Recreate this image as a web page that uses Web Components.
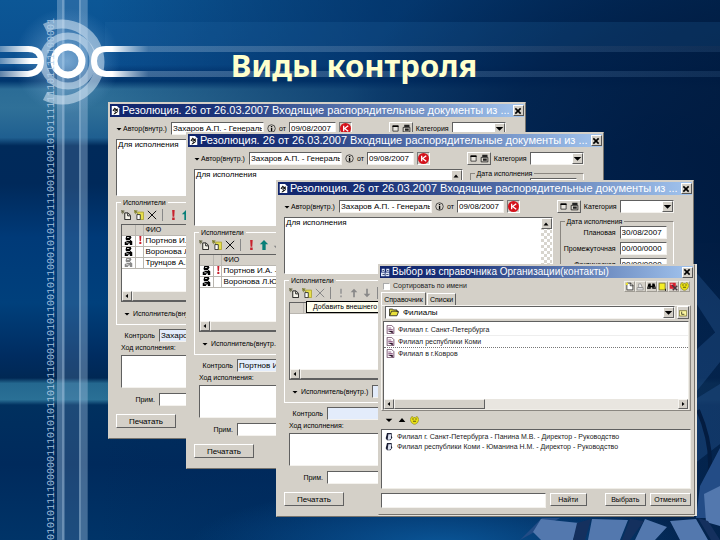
<!DOCTYPE html>
<html lang="ru">
<head>
<meta charset="utf-8">
<title>Виды контроля</title>
<style>
html, body { margin: 0; min-height: 100%; }
body { background: #002b5c; font-family: "Liberation Sans", Arial, sans-serif; }
</style>
</head>
<body>
<eos-slide></eos-slide>
<script>
const define = (name, html, setup) => {
  const tpl = document.createElement('template');
  tpl.innerHTML = html;
  customElements.define(name, class extends HTMLElement {
    constructor() {
      super();
      this.attachShadow({ mode: 'open' }).append(tpl.content.cloneNode(true));
    }
    connectedCallback() { if (setup) setup(this, this.shadowRoot); }
  });
};

const FORM = `
  * { box-sizing: border-box; }
  input, textarea, select, button { font: inherit; color: #000; margin: 0; border-radius: 0; min-width: 0; }
  input:not([type=checkbox]), textarea, select {
    display: block; background: #fff; padding: 0 1px; height: 13px; resize: none; overflow: hidden; font-size: 8px;
    border: 1px solid; border-color: #606060 #f4f2ee #f4f2ee #606060; appearance: none; outline: 0; }
  button { background: #d4d0c8; border: 1px solid; border-color: #fff #606060 #606060 #fff; padding: 0; height: 14px; line-height: 11px; }
  .combo { position: relative; }
  .combo ui-icon { position: absolute; right: 1px; top: 1px; pointer-events: none; background: #d4d0c8; border: 1px solid; border-color: #fff #606060 #606060 #fff; }
`;

/* 12x12 pictograms */
const ICONS = {
  doc: '<path fill="#fff" d="M1 0h7l3 3v9H1z"/><path d="M2 6l3-4 2 2 2-1v5l-4 3H3l3-3z" fill="#111"/><path d="M4 5h2v1H4zM6 7h2v1H6z" fill="#fff"/>',
  people: '<path fill="#dfe8f8" d="M1 1h4v4H1zM7 1h4v4H7zM0 6h5v5H0zM6 6h5v5H6z"/><path d="M2 3h2v1H2zM8 3h2v1H8zM2 8h3v1H2zM7 8h3v1H7z" fill="#102050"/>',
  close: '<path d="M2 2l8 8M10 2L2 10" stroke="#000" stroke-width="2.4"/>',
  down: '<path d="M1 4h10L6 9z"/>',
  up: '<path d="M1 9h10L6 3z"/>',
  left: '<path d="M8 2v8L3 6z"/>',
  right: '<path d="M4 2v8l5-4z"/>',
  info: '<circle cx="6" cy="6" r="5" fill="none" stroke="#222"/><path d="M5.200 5h1.800v5H5.200zM5.200 2.500h1.800v1.500H5.200z"/>',
  k: '<circle cx="6" cy="6" r="6" fill="#d4121c"/><path d="M4 3v6M9 3L5 6l4 3" stroke="#fff" stroke-width="1.400" fill="none"/>',
  page: '<path fill="#f4f2e8" stroke="#000" d="M4.500 3.500h4l3 3v5h-7z"/><path d="M8 4v3h3" fill="none" stroke="#000"/><path d="M0 2h4M2 0v5M0 0l4 4M4 0L0 4" stroke="#5c5c38" stroke-width=".8"/>',
  pagey: '<path fill="#e6df4c" stroke="#a8a030" d="M4.500 2.500h7v9h-7z"/><path fill="#fff" stroke="#222" d="M3.500 5.500h4v6h-4z"/><path d="M0 2h4M2 0v5M0 0l4 4M4 0L0 4" stroke="#777720" stroke-width=".9"/>',
  del: '<path d="M1 1l10 10M11 1L1 11" stroke="#111" stroke-width="1.200"/>',
  delg: '<path d="M1 1l10 10M11 1L1 11" stroke="#888" stroke-width="1.200"/>',
  bang: '<path fill="#c8202c" d="M5 0h3l-.5 8h-2zM5 9h3v3H5z"/>',
  bangg: '<path fill="#999" d="M5 1h2v6H5zM5 9h2v2H5z"/>',
  arrup: '<path fill="#087f78" d="M6 0l5 5H8v7H4V5H1z"/>',
  arrupg: '<path fill="#888" d="M6 1l4 4H7v6H5V5H2z"/>',
  arrdn: '<path fill="#888" d="M6 11l4-4H7V1H5v6H2z"/>',
  man: '<path d="M3 0h6l1 2-2 3 3 2v5H8l-1-3-2 3H1V8l3-1-2-3z"/><path d="M4 2h3M3 6h5M3 9h3" stroke="#fff"/>',
  mang: '<g fill="#8a8a8a"><path d="M3 0h6l1 2-2 3 3 2v5H8l-1-3-2 3H1V8l3-1-2-3z"/></g><path d="M4 2h3M3 6h5M3 9h3" stroke="#fff"/>',
  box: '<path fill="#e8e5de" stroke="#222" d="M2.500 2.500h7v7h-7z"/><path d="M2 2h8v2H2z"/>',
  cal: '<path fill="#d8d4cc" stroke="#111" d="M1.500 4.500h9v6h-9z"/><path d="M3 1h7v3H3zM4 6h5v3H4z" fill="#222"/>',
  folder: '<path fill="#e9e13a" stroke="#222" d="M.5 10.500v-8h4l1 1h4v2h2l-2 5z"/><path d="M1 10l2-5h8" stroke="#222" fill="none"/>',
  sheet: '<path fill="#fff" stroke="#5b3050" d="M1.500.5h6l3 3v8h-9z"/><path d="M3 4h4M3 6h6M3 8h6v3" stroke="#74386a"/>',
  face: '<path d="M3 0h7v4l1 3-3 4H3L1 8l1-4z" fill="#1c2036"/><path d="M5 2h4v6l-2 2H4z" fill="#dde2f0"/>',
  new: '<path fill="#fff" stroke="#222" d="M2.500 1.500h5l3 3v6h-8z"/><path d="M7 1v4h4" stroke="#222" fill="none"/><path fill="#e7df38" d="M1 1h3v3H1z"/>',
  edit: '<path fill="#eee" stroke="#888" d="M1.500 7.500h8v3h-8zM3.500 2.500h3l2 5h-5z"/>',
  find: '<path d="M2 2h3v3h2V2h3l2 7H7V7H5v2H0z"/><path d="M2 7h1M9 7h1" stroke="#fff"/>',
  book: '<path fill="#f5ee26" stroke="#6d6720" d="M1.500 1.500h8v9h-8z"/><path d="M10 9v3" stroke="#000"/>',
  bookdel: '<path fill="#d82030" d="M1 1h8v8H1z"/><path d="M4 4l7 7M11 5l-6 6" stroke="#4a3540" stroke-width="2"/><path d="M2 3h3" stroke="#fff"/>',
  hands: '<path d="M2 1h2l1 1h2l1-1h2l2 4-2 4-3 2H5L2 9 0 5z" fill="#e8df16" stroke="#77731a" stroke-width=".7"/><path d="M3 4h2M7 4h2M4 7h4" stroke="#33320a"/>',
  level: '<path fill="#fbf6a0" stroke="#66621c" d="M.5 2.500h11v8H.5z"/><path d="M4 4v4h4" stroke="#000" fill="none"/>'
};

customElements.define('ui-icon', class extends HTMLElement {
  constructor() { super(); this.attachShadow({ mode: 'open' }); }
  connectedCallback() {
    const s = this.getAttribute('size') || 10;
    this.shadowRoot.innerHTML = `<style>:host{display:inline-block;flex:none;line-height:0}svg{display:block}</style>
      <svg width="${s}" height="${s}" viewBox="0 0 12 12" aria-hidden="true">${ICONS[this.getAttribute('name')]}</svg>`;
  }
});

define('classic-window', `
<style>
  :host { display: block; background: #d4d0c8; padding: 2px; border: 1px solid; border-color: #d4d0c8 #77746e #77746e #d4d0c8; box-sizing: border-box; }
  header { display: flex; align-items: center; gap: 2px; height: var(--bar, 13px); padding: 0 0 0 1px; margin: -1px -1px 0;
    background: linear-gradient(90deg, #10246c, #1b3379 25%, #a2c4ee); color: #fff; font: var(--caption, 11px/13px "Liberation Sans", sans-serif); white-space: nowrap; }
  h2 { flex: 1; min-width: 0; margin: 0; font: inherit; }
  button { flex: none; box-sizing: border-box; width: 11px; height: 11px; padding: 0; display: grid; place-items: center;
    background: #d4d0c8; border: 1px solid; border-color: #fff #555 #555 #fff; }
</style>
<header><ui-icon size="9"></ui-icon><h2></h2><button aria-label="Закрыть"><ui-icon name="close" size="8"></ui-icon></button></header>
<slot></slot>`, (el, root) => {
  root.querySelector('h2').textContent = el.getAttribute('caption');
  const icon = root.querySelector('header > ui-icon');
  icon.setAttribute('name', el.getAttribute('icon') || 'doc');
  icon.connectedCallback();
});

define('scroll-strip', `
<style>
  :host { display: flex; height: 10px; background: #e9e6e0; }
  span { box-sizing: border-box; width: 10px; display: grid; place-items: center; background: #d4d0c8; border: 1px solid; border-color: #f6f4f0 #606060 #606060 #f6f4f0; }
  .thumb { width: var(--thumb, 80%); }
  .last { margin-left: auto; }
</style>
<span><ui-icon name="left" size="6"></ui-icon></span><span class="thumb"></span><span class="last"><ui-icon name="right" size="6"></ui-icon></span>`);

define('resolution-window', `
<style>${FORM}
  :host { display: block; font-size: 7px; line-height: 10px; }
  .body { padding: 5px 17px 8px 5px; }
  .line { display: flex; align-items: center; height: 13px; gap: 4px; white-space: nowrap; }
  .head { gap: 3px; }
  .author { flex: 0 0 93px; background: #e3ecfb; }
  .head label.a { flex: 0 0 52px; display: flex; align-items: center; gap: 1px; }
  .head .date, .dates input { width: 47px; }
  .k { display: grid; width: 13px; height: 13px; place-items: center; border: 1px solid; border-color: #777 #fff #fff #777; }
  .pair { display: flex; gap: 2px; margin-left: auto; padding: 0 1px; height: 13px; align-items: center; border: 1px solid; border-color: #fff #606060 #606060 #fff; }
  .combo { width: 54px; } .combo select { width: 100%; }
  .cols { display: grid; grid-template-columns: minmax(0, 1fr) 114px; column-gap: 7px; padding-top: 4px; }
  .cols > div { display: flex; flex-direction: column; }
  .text { display: flex; height: 57px; border: 1px solid; border-color: #606060 #fff #fff #606060; background: #fff; }
  .text textarea { flex: 1; height: auto; border: 0; }
  .bar { width: 11px; background: repeating-conic-gradient(#d8d5ce 0 25%, #fff 0 50%) 0 0 / 6px 6px; }
  .bar span { display: grid; place-items: center; height: 11px; background: #d4d0c8; border: 1px solid; border-color: #fff #606060 #606060 #fff; }
  fieldset { margin: 0; border: 1px solid; border-color: #8a8680 #fff #fff #8a8680; min-width: 0; padding: 0 5px 4px 4px; }
  fieldset.ex { border-color: #fff; margin-top: 2px; }
  legend { padding: 0 2px; height: 9px; line-height: 9px; }
  .tools { display: flex; align-items: center; height: 15px; gap: 3px; }
  .tools button { border: 0; width: 10px; height: 12px; display: grid; place-items: center; background: none; }
  .tools i { width: 1px; height: 12px; background: #888; margin: 0 2px; }
  .grid { display: flex; flex-direction: column; height: 78px; margin-top: 2px; background: #fff; border: 1px solid; border-color: #606060 #fff #606060 #606060; }
  .grid scroll-strip { margin-top: auto; }
  table { border-collapse: collapse; width: 100%; table-layout: fixed; font-size: 8px; }
  th { height: 10px; background: #d4d0c8; text-align: left; font-weight: 400; font-size: 7px; }
  th, td { padding: 0 2px; border: 1px solid #b9b6b0; border-width: 0 1px 1px 0; line-height: 9px; white-space: nowrap; overflow: hidden; }
  td { height: 11px; }
  td:nth-child(2) { padding: 0; }
  td ui-icon { vertical-align: top; }
  .ex .line { margin-top: 5px; }
  .ex .line label { display: flex; align-items: center; gap: 3px; flex: 0 0 79px; padding-left: 3px; }
  .line .wide { flex: 1; }
  .blue { background: #e3ecfb !important; }
  .form label.r { flex: 0 0 39px; text-align: right; }
  .form { padding-top: 4px; display: flex; flex-direction: column; }
  .form > label { padding-left: 5px; line-height: 12px; height: 13px; }
  .form textarea { height: 33px; margin-left: 5px; }
  .form .note { margin-top: 5px; }
  .print { width: 60px; margin-top: 8px; font-size: 8px; }
  .dates { align-self: start; padding: 0 6px 6px 0; }
  .dates legend { margin-left: 4px; }
  .dates .line { justify-content: flex-end; margin-bottom: 3px; }
</style>
<classic-window>
  <div class="body">
    <div class="line head">
      <label class="a" for="author"><ui-icon name="down" size="6"></ui-icon>Автор(внутр.)</label>
      <input id="author" class="author" value="Захаров А.П. - Генераль">
      <ui-icon name="info" size="9"></ui-icon>
      <label for="date">от</label><input id="date" class="date" value="09/08/2007">
      <span class="k"><ui-icon name="k" size="11"></ui-icon></span>
      <span class="pair"><ui-icon name="box" size="9"></ui-icon><ui-icon name="cal" size="9"></ui-icon></span>
      <label class="c" for="cat">Категория</label>
      <span class="combo"><select id="cat"></select><ui-icon name="down" size="9"></ui-icon></span>
    </div>
    <div class="cols">
      <div>
        <div class="text"><textarea aria-label="Текст резолюции">Для исполнения</textarea><div class="bar"><span><ui-icon name="up" size="6"></ui-icon></span></div></div>
        <fieldset class="ex"><legend>Исполнители</legend>
          <div class="tools"></div>
          <div class="grid"><table><colgroup><col style="width:13px"><col style="width:8px"><col></colgroup>
            <thead><tr><th></th><th></th><th class="name"></th></tr></thead><tbody></tbody></table><scroll-strip></scroll-strip></div>
          <div class="line"><label for="who"><ui-icon name="down" size="6"></ui-icon>Исполнитель(внутр.)</label><input id="who" class="wide blue"></div>
        </fieldset>
        <div class="form">
          <div class="line"><label class="r" for="ctl">Контроль</label><input id="ctl" class="wide blue"></div>
          <label for="run">Ход исполнения:</label>
          <textarea id="run"></textarea>
          <div class="line note"><label class="r" for="note">Прим.</label><input id="note" class="wide"></div>
          <button class="print">Печатать</button>
        </div>
      </div>
      <fieldset class="dates"><legend>Дата исполнения</legend>
        <div class="line"><label for="d1">Плановая</label><input id="d1" value="30/08/2007"></div>
        <div class="line"><label for="d2">Промежуточная</label><input id="d2" value="00/00/0000"></div>
        <div class="line"><label for="d3">Фактическая</label><input id="d3" value="00/00/0000"></div>
      </fieldset>
    </div>
  </div>
</classic-window>`, (el, root) => {
  root.querySelector('classic-window').setAttribute('caption', 'Резолюция. 26 от 26.03.2007 Входящие распорядительные документы из ...');
  root.querySelector('classic-window').connectedCallback();
  root.getElementById('ctl').value = el.getAttribute('control') || '';
  const people = (el.getAttribute('people') || '').split('|').filter(Boolean);
  root.querySelector('.name').textContent = people.length ? 'ФИО' : '';
  root.querySelector('tbody').innerHTML = people.map((p, i) =>
    `<tr><td><ui-icon name="${i === 2 ? 'mang' : 'man'}" size="9"></ui-icon></td><td>${i ? '' : '<ui-icon name="bang" size="8"></ui-icon>'}</td><td>${p}</td></tr>`).join('');
  const off = !people.length;
  const tool = (n, t) => `<button aria-label="${t}"><ui-icon name="${n}" size="10"></ui-icon></button>`;
  root.querySelector('.tools').innerHTML = tool('page', 'Добавить') + tool('pagey', 'Добавить внешнего') + tool(off ? 'delg' : 'del', 'Удалить')
    + '<i></i>' + tool(off ? 'bangg' : 'bang', 'Ответственный') + tool(off ? 'arrupg' : 'arrup', 'Выше') + tool('arrdn', 'Ниже') + '<i></i>';
});

define('organisation-dialog', `
<style>${FORM}
  :host { display: block; font-size: 7px; line-height: 10px; color: #222; --caption: 10px/12px "Liberation Sans", sans-serif; --bar: 12px; }
  .body { padding: 2px 1px 4px 0; }
  .opts { display: flex; align-items: center; justify-content: space-between; height: 12px; padding-right: 1px; }
  .opts label { display: flex; align-items: center; gap: 3px; padding-left: 2px; }
  .opts input { appearance: none; width: 7px; height: 7px; background: #fff; border: 1px solid; border-color: #aaa #fff #fff #aaa; }
  .opts div { display: flex; }
  .opts button { width: 11px; height: 11px; display: grid; place-items: center; border-color: #f0eee8 #a09c94 #a09c94 #f0eee8; }
  .tabs { display: flex; align-items: flex-end; gap: 1px; height: 13px; }
  .tabs button { border-bottom: 0; height: 12px; width: 29px; }
  .tabs button:first-child { width: 45px; height: 13px; }
  .panel { border: 1px solid; border-color: #f6f4f0 #8a8680 #8a8680 #f6f4f0; padding: 0 1px; }
  .pick { display: flex; gap: 2px; padding: 0 0 2px 2px; }
  .combo { flex: 1; }
  .combo select { width: 100%; padding-left: 17px; }
  .combo ui-icon[name=folder] { left: 4px; right: auto; top: 1px; background: none; border: 0; }
  .pick button { width: 12px; height: 13px; display: grid; place-items: center; }
  .list { background: #fff; border: 1px solid; border-color: #606060 #f0eee8 #f0eee8 #606060; }
  .big { height: 89px; display: flex; flex-direction: column; }
  ul { list-style: none; margin: 0; padding: 1px 0 0; }
  li { display: flex; align-items: center; gap: 3px; height: 12px; padding-left: 2px; white-space: nowrap; border-bottom: 1px solid transparent; }
  .big li { margin-bottom: -1px; border-bottom: 0; height: 13px; }
  .big li:nth-child(2) { border: 1px dotted #777; border-width: 0 0 1px; border-top: 1px solid #eee; }
  .big scroll-strip { margin-top: auto; --thumb: 91px; }
  .moves { display: flex; align-items: center; gap: 4px; height: 18px; padding: 2px 3px; }
  .moves button { border: 0; height: 9px; width: 9px; display: grid; place-items: center; background: none; }
  .small { height: 60px; }
  .small ul { padding: 2px 0 0 1px; }
  .small li { height: 10px; gap: 4px; }
  .foot { display: flex; align-items: flex-start; padding-top: 4px; gap: 4px; }
  .foot input { flex: 1; height: 15px; }
  .foot button { width: 41px; height: 13px; }
  .foot .f { width: 37px; margin-right: 14px; }
</style>
<classic-window icon="people" caption="Выбор из справочника Организации(контакты)">
  <div class="body">
    <div class="opts"><label><input type="checkbox">Сортировать по имени</label><div>
      <button aria-label="Новый"><ui-icon name="new" size="9"></ui-icon></button><button aria-label="Изменить"><ui-icon name="edit" size="9"></ui-icon></button><button aria-label="Искать"><ui-icon name="find" size="9"></ui-icon></button><button aria-label="Книга"><ui-icon name="book" size="9"></ui-icon></button><button aria-label="Удалить"><ui-icon name="bookdel" size="9"></ui-icon></button><button aria-label="Связи"><ui-icon name="hands" size="9"></ui-icon></button>
    </div></div>
    <div class="tabs"><button>Справочник</button><button>Списки</button></div>
    <div class="panel">
      <div class="pick"><span class="combo"><select aria-label="Раздел"><option>Филиалы</option></select><ui-icon name="folder" size="10"></ui-icon><ui-icon name="down" size="9"></ui-icon></span><button aria-label="Уровень вверх"><ui-icon name="level" size="8"></ui-icon></button></div>
      <div class="list big"><ul>
        <li><ui-icon name="sheet" size="9"></ui-icon>Филиал г. Санкт-Петербурга</li>
        <li><ui-icon name="sheet" size="9"></ui-icon>Филиал республики Коми</li>
        <li><ui-icon name="sheet" size="9"></ui-icon>Филиал в г.Ковров</li></ul><scroll-strip></scroll-strip></div>
    </div>
    <div class="moves"><button aria-label="Добавить"><ui-icon name="down" size="8"></ui-icon></button><button aria-label="Убрать"><ui-icon name="up" size="8"></ui-icon></button><button aria-label="Контакты"><ui-icon name="hands" size="9"></ui-icon></button></div>
    <div class="list small"><ul>
      <li><ui-icon name="face" size="8"></ui-icon>Филиал г. Санкт-Петербурга - Панина М.В. - Директор - Руководство</li>
      <li><ui-icon name="face" size="8"></ui-icon>Филиал республики Коми - Юманина Н.М. - Директор - Руководство</li></ul></div>
    <div class="foot"><input aria-label="Строка поиска"><button class="f">Найти</button><button>Выбрать</button><button>Отменить</button></div>
  </div>
</classic-window>`);

define('slide-backdrop', `
<style>
  :host { display: block; overflow: hidden;
    background:
      radial-gradient(ellipse 45% 42% at 92% 27%, #00163a 0, #00163acc 50%, transparent 100%),
      linear-gradient(90deg, transparent 72%, #2a5f9a66 100%) 0 100% / 100% 55% no-repeat,
      linear-gradient(180deg, #0c5796 0, #0a4f90 12%, #05407e 13%, #00366e 15%, #2b6c96 16.500%, #2f7098 20%, #1f5f90 25.500%, #002a5a 27%, #00295a 34%, #003a78 44%, #00407c 56%, #002c60 66%, #002854 70%, #24688f 71%, #2a7096 74%, #00305f 75%, #002a5c 86%, #003468 100%); }
  svg { display: block; width: 100%; height: 100%; }
</style>
<svg viewBox="0 0 720 540" preserveAspectRatio="xMinYMin slice" aria-hidden="true">
  <defs>
    <linearGradient id="dark"><stop offset="0" stop-color="#002454" stop-opacity="0"/><stop offset=".45" stop-color="#002a5e" stop-opacity=".85"/><stop offset="1" stop-color="#001c42"/></linearGradient>
    <linearGradient id="ray"><stop offset="0" stop-color="#fff"/><stop offset=".06" stop-color="#cfe2f4" stop-opacity=".28"/><stop offset="1" stop-color="#7fb0e0" stop-opacity=".12"/></linearGradient>
    <linearGradient id="lft" gradientUnits="userSpaceOnUse" x1="0" x2="30" y1="0" y2="0"><stop offset="0" stop-color="#fff" stop-opacity=".35"/><stop offset="1" stop-color="#fff"/></linearGradient>
    <radialGradient id="glow"><stop offset="0" stop-color="#b8dcf8" stop-opacity=".55"/><stop offset="1" stop-color="#8fc0e8" stop-opacity="0"/></radialGradient>
    <radialGradient id="floor"><stop offset="0" stop-color="#0a5698"/><stop offset="1" stop-color="#0a5090" stop-opacity="0"/></radialGradient>
  </defs>
  <rect x="100" width="620" height="540" fill="url(#dark)" opacity=".8"/>
  <ellipse cx="440" cy="545" rx="250" ry="60" fill="url(#floor)"/>
  <g fill="#2b5c98" opacity=".35"><path d="M694 270l26 30v40l-26-40zM696 350l24-22v34l-24 30zM694 400l26-16v60l-26 20z"/></g>
  <path d="M698 410q22 50 4 96" fill="none" stroke="#031c40" stroke-width="4"/>
  <path d="M520 540l22-22h178v-70l-20 38-4 32H560z" fill="#234c86"/>
  <g fill="#5378ae"><path d="M541 519l38 4-6 17h-32l-8-8zM592 519l36 1-8 20h-32zM645 519l22 8-12 13h-20zM670 521l26-2 12 21h-28zM704 494l16-8v40l-14-4z"/></g>
  <g fill="#14305e"><path d="M577 523l14-4-6 21h-12zM630 519l14 2-14 19h-8zM698 518l10 3 12 19h-9z"/></g>
  <rect x="57" width="30" height="540" fill="#82aad0" opacity=".22"/>
  <g fill="#b4cfe8"><rect x="57" width="8" height="540" opacity=".25"/><rect x="62" width="2" height="540" opacity=".35"/><rect x="79" width="9" height="540" opacity=".25"/><rect x="79" width="2" height="540" opacity=".3"/></g>
  <rect x="105" y="22" width="615" height="24" fill="#2a6ca8" opacity=".2"/>
  <circle cx="67" cy="61" r="53" fill="url(#glow)"/>
  <g fill="none" stroke="#dbeaf6" stroke-opacity=".55"><path d="M45 28A38 38 0 1 1 45 96" stroke-width="9"/><circle cx="68" cy="61" r="25" stroke-width="7"/></g>
  <circle cx="68" cy="61" r="14" fill="none" stroke="#fff" stroke-width="7"/>
  <path d="M0 49h28q13 0 13 12t-13 13H0" fill="none" stroke="url(#lft)" stroke-width="6"/>
  <rect y="58" width="38" height="6" fill="url(#lft)"/>
  <path d="M112 49h-6q-12 0-12 12t12 13h6" fill="none" stroke="#fff" stroke-width="6"/>
  <rect x="112" y="46" width="608" height="6" fill="url(#ray)"/><rect x="112" y="71" width="608" height="6" fill="url(#ray)"/>
  <text transform="translate(54 540) rotate(-90)" font-family="Liberation Mono, monospace" font-size="10" fill="#b5d2ea" fill-opacity=".9">010101111000001110101011010110001101011001011000101011011100101001010111111101111100001</text>
</svg>`);

define('eos-slide', `
<style>
  :host { display: block; position: relative; min-height: 100vh; overflow: hidden; }
  slide-backdrop { position: absolute; inset: 0; }
  h1 { position: relative; margin: 0; padding: 44px 12px 0 0; text-align: center; color: #ffffcc; font: bold 31px/42px "Noto Sans", sans-serif; }
  resolution-window, organisation-dialog, .tip { position: absolute; }
  resolution-window { width: 58%; }
  .w1 { left: 108px; top: 102px; } .w2 { left: 186px; top: 132px; } .w3 { left: 276px; top: 180px; }
  organisation-dialog { left: 378px; top: 264px; width: 44%; border: 1px solid #e4e1da; border-width: 0 2px 1px 0; box-sizing: content-box; }
  .tip { left: 306px; top: 301px; padding: 0 6px; font-size: 7px; line-height: 10px; background: #fffff0; border: 1px solid #000; }
</style>
<slide-backdrop></slide-backdrop>
<h1>Виды контроля</h1>
<resolution-window class="w1" people="Портнов И.А. -|Воронова Л.Ю.|Трунцов А.Г." control="Захаров А.П."></resolution-window>
<resolution-window class="w2" people="Портнов И.А. -|Воронова Л.Ю." control="Портнов И.А."></resolution-window>
<resolution-window class="w3"></resolution-window>
<div class="tip" role="tooltip">Добавить внешнего</div>
<organisation-dialog></organisation-dialog>`);
</script>
</body>
</html>
